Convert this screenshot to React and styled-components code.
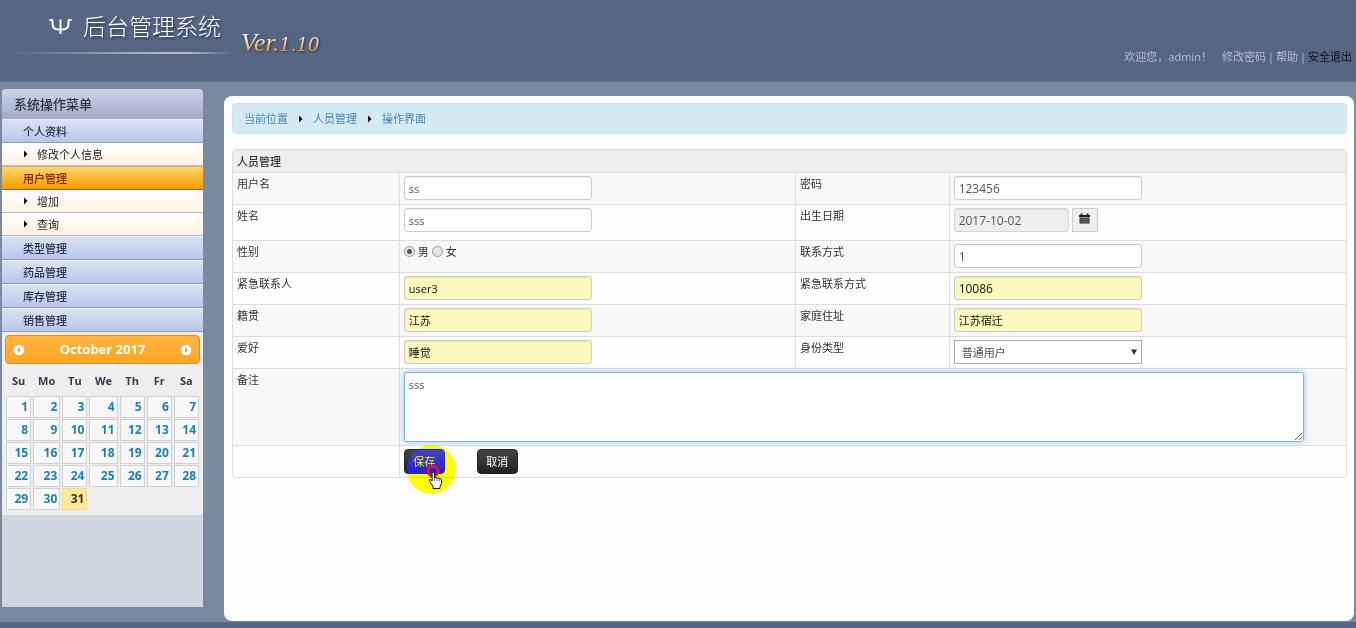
import React, {useState} from "react";
import styled, {createGlobalStyle, css} from "styled-components";

const GlobalStyle = createGlobalStyle`
    * {
        box-sizing: border-box;
    }

    body {
        margin: 0;
        background: #7989a0;
        color: #333;
        font: 11px/15px "Open Sans", "Noto Sans CJK SC", sans-serif;
    }

    a {
        color: inherit;
        text-decoration: none;
    }
`

const Page = styled.div`
    display: flex;
    flex-direction: column;
    min-height: 100vh;
    border-bottom: 6px solid #566584;
`

const Header = styled.header`
    display: flex;
    align-items: flex-start;
    height: 82px;
    padding: 0 4px 0 8px;
    background: #566584;
    border-bottom: 1px solid #5f6e8b;
`

const Brand = styled.div`
    display: flex;
    align-items: center;
    gap: 10px;
    width: 223px;
    height: 54px;
    padding: 0 0 0 41px;
    border-bottom: 2px solid;
    border-image: linear-gradient(90deg, transparent, #a9b1b8 60%, #b8bcbf 80%, transparent) 1;
`

const Title = styled.h1`
    margin: 0;
    color: #fff;
    font-size: 23px;
    line-height: 52px;
    font-weight: 300;
    white-space: nowrap;
    text-shadow: 1px 2px 2px #2f3b55;
`

const Version = styled.span`
    margin: 28px 0 0 10px;
    font: italic 26px/30px "Liberation Serif", serif;
    background: linear-gradient(#fff 25%, #f8d79a 45%, #e99a2c 72%);
    background-clip: text;
    color: transparent;
    filter: drop-shadow(1px 1px 1px #2c3549);

    small {
        font: italic 18px/30px "DejaVu Serif", serif;
    }
`

const UserLinks = styled.nav`
    display: flex;
    gap: 2px;
    margin: 49px 0 0 auto;
    color: #b3bdd9;
`

const Greeting = styled.span`
    margin-right: 8px;
`

const ExitLink = styled.a`
    && {
        color: #0c1020;
    }
`

const Body = styled.div`
    display: flex;
    flex: 1;
    align-items: stretch;
    gap: 21px;
    padding: 7px 2px 1px;
`

const Sidebar = styled.aside`
    flex: none;
    width: 201px;
    margin-bottom: 14px;
    background: #cfd8e1;
    border-radius: 4px 4px 0 0;
    overflow: hidden;
`

const MenuTitle = styled.h2`
    margin: 0;
    padding: 0 12px;
    height: 30px;
    font-size: 13px;
    line-height: 30px;
    font-weight: 500;
    color: #2b3348;
    background: linear-gradient(#cdd4e8, #a2abc8);
`

const MenuItem = styled.a`
    display: block;
    height: 24px;
    padding: 0 21px;
    line-height: 23px;
    font-weight: 500;
    border-top: 1px solid #eef1fa;
    border-bottom: 1px solid #8e9cc2;
    && {
        color: #2b3348;
    }
    background: linear-gradient(#dbe1f4, #b9c6ea);
    ${props => props.$active && css`
        && {
            color: #86200a;
        }
        border-top-color: #c9b68c;
        border-bottom-color: #c4531a;
        background: linear-gradient(#ffd76e, #f59b00);
    `}
`

const SubItem = styled.a`
    display: flex;
    align-items: center;
    gap: 9px;
    height: 23px;
    padding: 0 21px;
    border-bottom: 1px solid #aeb9d2;
    background: linear-gradient(#fff, #fff2e2);
    && {
        color: #222;
    }
`

const CalendarBox = styled.section`
    padding: 3px 3px 4px;
    background: #eee;
`

const CalendarHead = styled.div`
    display: flex;
    align-items: center;
    justify-content: space-between;
    height: 29px;
    padding: 0 7px;
    border: 1px solid #e78f08;
    border-radius: 4px;
    background: linear-gradient(#ffb53f, #fea526);
    color: #fff;
    font-size: 13px;
    font-weight: 700;
`

const CalendarButton = styled.button`
    display: flex;
    padding: 0;
    border: 0;
    background: none;
`

const CalendarTable = styled.table`
    width: 100%;
    table-layout: fixed;
    border-collapse: collapse;
    font-size: 12px;
    font-weight: 700;

    th {
        height: 32px;
        padding: 0;
        color: #333b49;
        font-size: 11px;
    }

    td {
        padding: 0 1px 1px;
    }
`

const Day = styled.a`
    display: block;
    height: 22px;
    padding: 0 2px;
    border: 1px solid ${props => props.$today ? '#f3d98a' : '#d0d0d0'};
    background: ${props => props.$today ? '#ffe996' : '#f7f7f7'};
    line-height: 20px;
    text-align: right;
    && {
        color: ${props => props.$today ? '#363636' : '#1c80b5'};
    }
`

const Panel = styled.main`
    flex: 1;
    min-width: 0;
    padding: 7px 7px 7px 8px;
    margin-top: 7px;
    border-radius: 8px;
    background: #fdfefd;
`

const Breadcrumb = styled.nav`
    display: flex;
    align-items: center;
    gap: 10px;
    height: 31px;
    padding: 0 11px;
    margin-bottom: 15px;
    border: 1px solid #c9e4ef;
    border-radius: 4px;
    background: #d6eaf5;
    color: #4189ae;
`

const Table = styled.table`
    width: 100%;
    table-layout: fixed;
    border: 1px solid #ddd;
    border-radius: 4px;
    border-collapse: separate;
    border-spacing: 0;

    thead th {
        height: 22px;
        padding: 0 4px;
        background: #ededec;
        text-align: left;
        font-weight: 500;
    }

    tbody tr:nth-child(odd) {
        background: #f8f8f8;
    }

    tbody tr:last-child {
        background: none;
    }
`

const Cell = styled.td`
    height: ${props => props.$tall ? '36px' : '32px'};
    padding: 3px 4px;
    border-top: 1px solid #ddd;
    vertical-align: top;

    & + & {
        border-left: 1px solid #ddd;
    }
`

const Flow = styled.div`
    display: flex;
    align-items: flex-start;
    gap: ${props => props.$gap || 3}px;
`

const FieldLabel = styled.label`
    display: block;
`

const fieldBox = css`
    display: block;
    border: 1px solid #ccc;
    border-radius: 3px;
    background: #fff;
    color: #555;
    font: 11px/15px "Open Sans", "Noto Sans CJK SC", sans-serif;
`

const Input = styled.input`
    ${fieldBox}
    width: ${props => props.$short ? '115px' : '188px'};
    height: 24px;
    padding: 1px 4px;
    box-shadow: inset 0 1px 1px rgba(0, 0, 0, 0.06);
    ${props => props.$filled && css`
        background: #f8f9bb;
        color: #111;
    `}
    ${props => props.$latin && css`
        font-size: 12px;
    `}
    &:read-only {
        background: #eee;
        border-color: #d4d4d4;
    }
`

const DateButton = styled.button`
    display: flex;
    justify-content: center;
    width: 26px;
    height: 24px;
    padding: 4px 0 0;
    border: 1px solid #ccc;
    background: #eee;
`

const SelectBox = styled.div`
    position: relative;
    width: 188px;

    svg {
        position: absolute;
        top: 9px;
        right: 5px;
        pointer-events: none;
    }
`

const Select = styled.select`
    ${fieldBox}
    appearance: none;
    width: 100%;
    height: 24px;
    padding: 1px 7px 0;
    border-color: #aaa;
    border-radius: 0;
`

const TextArea = styled.textarea`
    ${fieldBox}
    width: 96%;
    height: 70px;
    padding: 4px;
    border-color: #7fb6dc;
    box-shadow: 0 0 6px rgba(82, 168, 236, 0.6);
    outline: none;
`

const RadioLabel = styled.label`
    display: flex;
    align-items: center;
    gap: 3px;
`

const Radio = styled.input`
    appearance: none;
    width: 11px;
    height: 11px;
    margin: 0;
    border: 1px solid #999;
    border-radius: 50%;
    background: #e6e6e6;

    &:checked {
        background: radial-gradient(#555 0 2px, #e6e6e6 3px);
    }
`

const Button = styled.button`
    width: 41px;
    height: 25px;
    padding: 0;
    border: 1px solid #222;
    border-radius: 4px;
    background: linear-gradient(#444, #222);
    color: #fff;
    font: 11px/15px "Open Sans", "Noto Sans CJK SC", sans-serif;
`

const ClickSpot = styled.div`
    position: relative;
    height: 25px;
`

const Halo = styled.span`
    position: absolute;
    top: -4px;
    left: 3px;
    width: 49px;
    height: 49px;
    border-radius: 50%;
    background: #00f;
    mix-blend-mode: difference;
    pointer-events: none;
`

const Pointer = styled.svg`
    position: absolute;
    top: 15px;
    left: 21px;
    pointer-events: none;
`

const Arrow = () => (
    <svg width="5" height="8" viewBox="0 0 5 8" aria-hidden="true">
        <path d="M1 0.5L4.5 4L1 7.5z" fill="#000"/>
    </svg>
)

const Circle = ({flip}) => (
    <svg width="12" height="12" viewBox="0 0 12 12" aria-hidden="true">
        <circle cx="6" cy="6" r="5.3" fill="#fff"/>
        <path d={flip ? "M5 3.3L8 6L5 8.7z" : "M7 3.3L4 6L7 8.7z"} fill="#f0a030"/>
    </svg>
)

const menu = [
    {name: '个人资料', children: ['修改个人信息']},
    {name: '用户管理', active: true, children: ['增加', '查询']},
    {name: '类型管理', children: []},
    {name: '药品管理', children: []},
    {name: '库存管理', children: []},
    {name: '销售管理', children: []}
];

const weekDays = ['Su', 'Mo', 'Tu', 'We', 'Th', 'Fr', 'Sa'];
const dayWidths = [27, 29, 27, 30, 27, 27, 27];
const weeks = [0, 1, 2, 3, 4].map(week => weekDays.map((_, i) => week * 7 + i + 1));

const Calendar = () => (
    <CalendarBox>
        <CalendarHead>
            <CalendarButton aria-label="Prev"><Circle/></CalendarButton>
            October 2017
            <CalendarButton aria-label="Next"><Circle flip/></CalendarButton>
        </CalendarHead>
        <CalendarTable>
            <colgroup>
                {dayWidths.map((width, i) => <col key={i} width={width}/>)}
            </colgroup>
            <thead>
                <tr>{weekDays.map(day => <th key={day}>{day}</th>)}</tr>
            </thead>
            <tbody>
                {weeks.map(week => (
                    <tr key={week[0]}>
                        {week.map(day => (
                            <td key={day}>
                                {day <= 31 && <Day href="#" $today={day === 31}>{day}</Day>}
                            </td>
                        ))}
                    </tr>
                ))}
            </tbody>
        </CalendarTable>
    </CalendarBox>
)

const UserForm = () => {

    const [user, setUser] = useState({
        username: 'ss',
        password: '123456',
        name: 'sss',
        birthday: '2017-10-02',
        sex: '男',
        phone: '1',
        contact: 'user3',
        contactPhone: '10086',
        origin: '江苏',
        address: '江苏宿迁',
        hobby: '睡觉',
        type: '普通用户',
        remark: 'sss'
    });

    const field = name => ({
        id: name,
        value: user[name],
        onChange: e => setUser({...user, [name]: e.target.value})
    });

    return (
        <Table>
            <colgroup>
                <col width="14.9%"/>
                <col width="35.6%"/>
                <col width="13.8%"/>
                <col/>
            </colgroup>
            <thead>
                <tr><th colSpan="4">人员管理</th></tr>
            </thead>
            <tbody>
                <tr>
                    <Cell><FieldLabel htmlFor="username">用户名</FieldLabel></Cell>
                    <Cell><Input {...field('username')}/></Cell>
                    <Cell><FieldLabel htmlFor="password">密码</FieldLabel></Cell>
                    <Cell><Input $latin {...field('password')}/></Cell>
                </tr>
                <tr>
                    <Cell $tall><FieldLabel htmlFor="name">姓名</FieldLabel></Cell>
                    <Cell><Input {...field('name')}/></Cell>
                    <Cell><FieldLabel htmlFor="birthday">出生日期</FieldLabel></Cell>
                    <Cell>
                        <Flow>
                            <Input $latin $short readOnly {...field('birthday')}/>
                            <DateButton aria-label="选择日期">
                                <svg width="11" height="12" viewBox="0 0 11 12">
                                    <path d="M0 2h1.5V0.5h2V2h4V0.5h2V2H11v2H0z" fill="#222"/>
                                    <path d="M0.5 4.5h10v6h-10z" fill="#333"/>
                                    <path d="M0.5 6.5h10M0.5 8.5h10M3 4.5v6M5.5 4.5v6M8 4.5v6" stroke="#888" strokeWidth="0.5"/>
                                </svg>
                            </DateButton>
                        </Flow>
                    </Cell>
                </tr>
                <tr>
                    <Cell>性别</Cell>
                    <Cell>
                        <Flow>
                            {['男', '女'].map(sex => (
                                <RadioLabel key={sex}>
                                    <Radio
                                        type="radio"
                                        name="sex"
                                        checked={user.sex === sex}
                                        onChange={() => setUser({...user, sex})}
                                    />
                                    {sex}
                                </RadioLabel>
                            ))}
                        </Flow>
                    </Cell>
                    <Cell><FieldLabel htmlFor="phone">联系方式</FieldLabel></Cell>
                    <Cell><Input $latin {...field('phone')}/></Cell>
                </tr>
                <tr>
                    <Cell><FieldLabel htmlFor="contact">紧急联系人</FieldLabel></Cell>
                    <Cell><Input $filled {...field('contact')}/></Cell>
                    <Cell><FieldLabel htmlFor="contactPhone">紧急联系方式</FieldLabel></Cell>
                    <Cell><Input $latin $filled {...field('contactPhone')}/></Cell>
                </tr>
                <tr>
                    <Cell><FieldLabel htmlFor="origin">籍贯</FieldLabel></Cell>
                    <Cell><Input $filled {...field('origin')}/></Cell>
                    <Cell><FieldLabel htmlFor="address">家庭住址</FieldLabel></Cell>
                    <Cell><Input $filled {...field('address')}/></Cell>
                </tr>
                <tr>
                    <Cell><FieldLabel htmlFor="hobby">爱好</FieldLabel></Cell>
                    <Cell><Input $filled {...field('hobby')}/></Cell>
                    <Cell><FieldLabel htmlFor="type">身份类型</FieldLabel></Cell>
                    <Cell>
                        <SelectBox>
                            <Select {...field('type')}>
                                <option>普通用户</option>
                            </Select>
                            <svg width="6" height="6" viewBox="0 0 6 6">
                                <path d="M0 0.5h6L3 6z" fill="#333"/>
                            </svg>
                        </SelectBox>
                    </Cell>
                </tr>
                <tr>
                    <Cell><FieldLabel htmlFor="remark">备注</FieldLabel></Cell>
                    <Cell colSpan="3"><TextArea {...field('remark')}/></Cell>
                </tr>
                <tr>
                    <Cell/>
                    <Cell colSpan="3">
                        <Flow $gap={32}>
                            <ClickSpot>
                                <Button>保存</Button>
                                <Halo/>
                                <Pointer width="18" height="26" viewBox="0 0 18 26">
                                    <circle cx="8" cy="7" r="5" fill="none" stroke="#e0103c" strokeWidth="3"/>
                                    <path
                                        d="M7.5 8.5q1.5-1 2 .5v5l1-.6 1.5.8 1-.4 1.3.9 1-.2q1.2.4 1.2 2v3l-1.5 3v2H8v-2l-3.5-5.5q-.8-1.5.6-1.7l2 1.7v-8z"
                                        fill="#fff"
                                        stroke="#111"
                                    />
                                    <path d="M9.5 14v3M12 14.5v2.5M14.3 15v2.5" stroke="#777"/>
                                </Pointer>
                            </ClickSpot>
                            <Button>取消</Button>
                        </Flow>
                    </Cell>
                </tr>
            </tbody>
        </Table>
    )
}

const App = () => (
    <>
        <GlobalStyle/>
        <Page>
            <Header>
                <Brand>
                    <svg width="24" height="17" viewBox="0 0 24 17" aria-hidden="true">
                        <path
                            d="M0.5 2H4M3.5 2v3.500q0 6 6 6h4q6 0 6-6V2M19 2h3.500M11.500 1.500V16"
                            fill="none"
                            stroke="#fff"
                            strokeWidth="2"
                        />
                    </svg>
                    <Title>后台管理系统</Title>
                </Brand>
                <Version>Ver.<small>1.10</small></Version>
                <UserLinks>
                    <Greeting>欢迎您，admin！</Greeting>
                    <a href="#">修改密码</a>|
                    <a href="#">帮助</a>|
                    <ExitLink href="#">安全退出</ExitLink>
                </UserLinks>
            </Header>

            <Body>
                <Sidebar>
                    <MenuTitle>系统操作菜单</MenuTitle>
                    {menu.map(item => (
                        <div key={item.name}>
                            <MenuItem href="#" $active={item.active}>{item.name}</MenuItem>
                            {item.children.map(child => (
                                <SubItem href="#" key={child}><Arrow/>{child}</SubItem>
                            ))}
                        </div>
                    ))}
                    <Calendar/>
                </Sidebar>

                <Panel>
                    <Breadcrumb>
                        <a href="#">当前位置</a>
                        <Arrow/>
                        <a href="#">人员管理</a>
                        <Arrow/>
                        <a href="#">操作界面</a>
                    </Breadcrumb>
                    <UserForm/>
                </Panel>
            </Body>
        </Page>
    </>
)

export default App;
